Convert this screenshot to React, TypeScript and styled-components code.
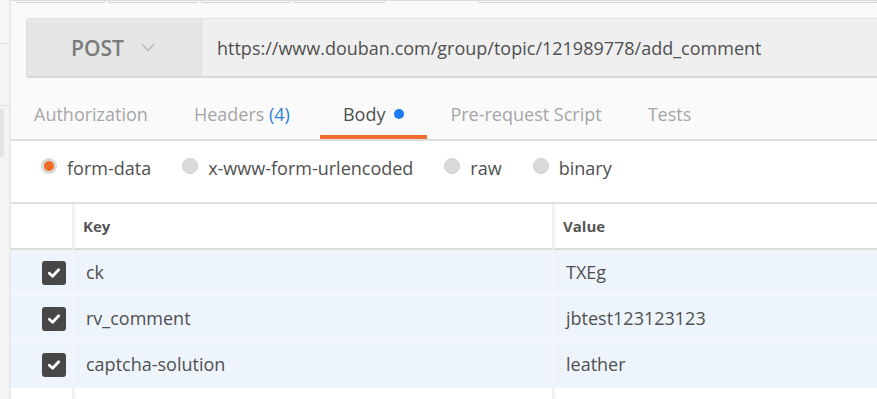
import React from "react";
import styled, { createGlobalStyle } from "styled-components";

const Global = createGlobalStyle`
  html, body { margin: 0; padding: 0; background: #ffffff; }
  body { font-family: "Open Sans", "Liberation Sans", sans-serif; overflow: hidden; }
  * { box-sizing: border-box; }
`;

const Page = styled.div`
  display: flex;
  width: 877px;
  overflow: hidden;
  background: #ffffff;
`;

const Sidebar = styled.div`
  width: 9px;
  flex-shrink: 0;
  display: flex;
  flex-direction: column;
  background: #f4f4f4;
`;

const SideBlock = styled.div<{ $h: number; $bg: string }>`
  height: ${(p) => p.$h}px;
  flex-shrink: 0;
  background: ${(p) => p.$bg};
  border-bottom: 1px solid #e2e2e2;
`;

const SideKnob = styled.div`
  margin-top: 3px;
  width: 4px;
  height: 48px;
  flex-shrink: 0;
  background: #e4e4e4;
  border-radius: 0 3px 3px 0;
`;

const Divider = styled.div`
  width: 2px;
  flex-shrink: 0;
  background: linear-gradient(to right, #e6e6e6, #ededed);
`;

const Main = styled.div`
  flex: 1;
  display: flex;
  flex-direction: column;
  min-width: 0;
`;

const TopStrip = styled.div`
  height: 18px;
  flex-shrink: 0;
  background: #f9f9f9;
  display: flex;
  align-items: flex-start;
  border-top: 1px solid #dcdcdc;
  padding-left: 5px;
  gap: 3px;
`;

const Stub = styled.div<{ $w: number }>`
  width: ${(p) => p.$w}px;
  height: 2px;
  border: 1px solid #d2d2d2;
  border-top: none;
  border-radius: 0 0 2px 2px;
`;

const StubGap = styled.div<{ $w: number }>`
  width: ${(p) => p.$w}px;
`;

const UrlBarWrap = styled.div`
  flex-shrink: 0;
  background: #f9f9f9;
  padding-left: 15px;
`;

const UrlBar = styled.div`
  display: flex;
  height: 60px;
  border-top: 1px solid #e3e3e3;
  border-bottom: 2px solid #d8d8d8;
  border-left: 1px solid #e0e0e0;
  border-radius: 3px 0 0 3px;
  overflow: hidden;
`;

const Method = styled.div`
  width: 175px;
  display: flex;
  align-items: center;
  padding-left: 44px;
  background: #e6e6e6;
  border-right: 1px solid #e0e0e0;
  color: #7b7b7b;
  font-size: 21px;
  font-weight: 600;
  gap: 17px;
`;

const Url = styled.div`
  flex: 1;
  display: flex;
  align-items: center;
  padding-left: 15px;
  background: #efefef;
  color: #505050;
  font-size: 18px;
  white-space: nowrap;
`;

const Tabs = styled.div`
  height: 63px;
  flex-shrink: 0;
  background: #fafafa;
  display: flex;
  align-items: stretch;
  border-bottom: 2px solid #dddddd;
`;

const Tab = styled.div<{ $active?: boolean; $extra?: number }>`
  display: flex;
  align-items: center;
  gap: 9px;
  padding: 14px ${(p) => 23 + (p.$extra ?? 0)}px 0 23px;
  font-size: 18px;
  color: ${(p) => (p.$active ? "#505050" : "#a6a6a6")};
  border-bottom: 4px solid ${(p) => (p.$active ? "#f26b2f" : "transparent")};
  white-space: nowrap;
`;

const Count = styled.span`
  color: #2f7fd6;
`;

const Dot = styled.span`
  width: 10px;
  height: 10px;
  border-radius: 50%;
  background: #1a7cf0;
`;

const BodyTypes = styled.div`
  height: 63px;
  flex-shrink: 0;
  display: flex;
  align-items: center;
  padding: 0 0 8px 30px;
  gap: 31px;
  border-bottom: 2px solid #e0e0e0;
  background: #ffffff;
`;

const RadioItem = styled.label`
  display: flex;
  align-items: center;
  gap: 10px;
  font-size: 18px;
  color: #505050;
`;

const Radio = styled.span<{ $on?: boolean }>`
  width: 16px;
  height: 16px;
  border-radius: 50%;
  margin-top: -4px;
  background: ${(p) => (p.$on ? "#f26b24" : "#dadada")};
  border: ${(p) => (p.$on ? "3px solid #d9d9d9" : "1px solid #cfcfcf")};
`;

const Grid = styled.div`
  flex-shrink: 0;
  display: grid;
  grid-template-columns: 61px 480px 1fr;
`;

const HeadCell = styled.div<{ $line?: boolean }>`
  height: 46px;
  display: flex;
  align-items: center;
  padding-left: 8px;
  font-size: 15px;
  font-weight: 700;
  color: #555555;
  background: #ffffff;
  border-left: ${(p) => (p.$line ? "3px solid #f2f2f2" : "none")};
  border-bottom: 2px solid #dcdcdc;
`;

const Cell = styled.div<{ $line?: boolean; $last?: boolean }>`
  height: 46px;
  display: flex;
  align-items: center;
  padding-left: 12px;
  font-size: 18px;
  color: #505050;
  background: #edf4fc;
  border-bottom: 2px solid ${(p) => (p.$last ? "#edf4fc" : "#f4f8fd")};
  border-left: ${(p) => (p.$line ? "2px solid #f1f6fd" : "none")};
`;

const CheckCell = styled(Cell)`
  justify-content: flex-end;
  padding-left: 0;
  padding-right: 6px;
`;

const Box = styled.span`
  width: 24px;
  height: 24px;
  margin-top: 2px;
  border-radius: 3px;
  background: #474747;
  display: flex;
  align-items: center;
  justify-content: center;
`;

const EmptyCell = styled.div<{ $line?: boolean }>`
  height: 14px;
  background: #ffffff;
  border-left: ${(p) => (p.$line ? "3px solid #f2f2f2" : "none")};
`;

const Check = () => (
  <svg width="14" height="14" viewBox="0 0 14 14">
    <path d="M2.3 7.2 L5.6 10.3 L11.7 3.7" fill="none" stroke="#ffffff" strokeWidth="2.8" strokeLinecap="round" strokeLinejoin="round" />
  </svg>
);

const Chevron = () => (
  <svg width="14" height="9" viewBox="0 0 14 9">
    <path d="M1 1 L7 7.5 L13 1" fill="none" stroke="#bcbcbc" strokeWidth="1.6" />
  </svg>
);

const rows = [
  { key: "ck", value: "TXEg" },
  { key: "rv_comment", value: "jbtest123123123" },
  { key: "captcha-solution", value: "leather" },
];

export default function App() {
  return (
    <>
      <Global />
      <Page>
        <Sidebar>
          <SideBlock $h={44} $bg="#f7f7f7" />
          <SideBlock $h={62} $bg="#f5f5f5" />
          <SideKnob />
        </Sidebar>
        <Divider />
        <Main>
          <TopStrip>
            <Stub $w={89} />
            <Stub $w={91} />
            <Stub $w={90} />
            <Stub $w={91} />
            <StubGap $w={88} />
            <Stub $w={400} />
          </TopStrip>
          <UrlBarWrap>
            <UrlBar>
              <Method>
                POST
                <Chevron />
              </Method>
              <Url>https://www.douban.com/group/topic/121989778/add_comment</Url>
            </UrlBar>
          </UrlBarWrap>
          <Tabs>
            <Tab>Authorization</Tab>
            <Tab $extra={7}>
              <span>
                Headers <Count>(4)</Count>
              </span>
            </Tab>
            <Tab $active>
              Body
              <Dot />
            </Tab>
            <Tab>Pre-request Script</Tab>
            <Tab>Tests</Tab>
          </Tabs>
          <BodyTypes>
            <RadioItem>
              <Radio $on />
              form-data
            </RadioItem>
            <RadioItem>
              <Radio />
              x-www-form-urlencoded
            </RadioItem>
            <RadioItem>
              <Radio />
              raw
            </RadioItem>
            <RadioItem>
              <Radio />
              binary
            </RadioItem>
          </BodyTypes>
          <Grid>
            <HeadCell />
            <HeadCell $line>Key</HeadCell>
            <HeadCell $line>Value</HeadCell>
            {rows.map((r, i) => (
              <React.Fragment key={r.key}>
                <CheckCell $last={i === rows.length - 1}>
                  <Box>
                    <Check />
                  </Box>
                </CheckCell>
                <Cell $line $last={i === rows.length - 1}>{r.key}</Cell>
                <Cell $line $last={i === rows.length - 1}>{r.value}</Cell>
              </React.Fragment>
            ))}
            <EmptyCell />
            <EmptyCell $line />
            <EmptyCell $line />
          </Grid>
        </Main>
      </Page>
    </>
  );
}
